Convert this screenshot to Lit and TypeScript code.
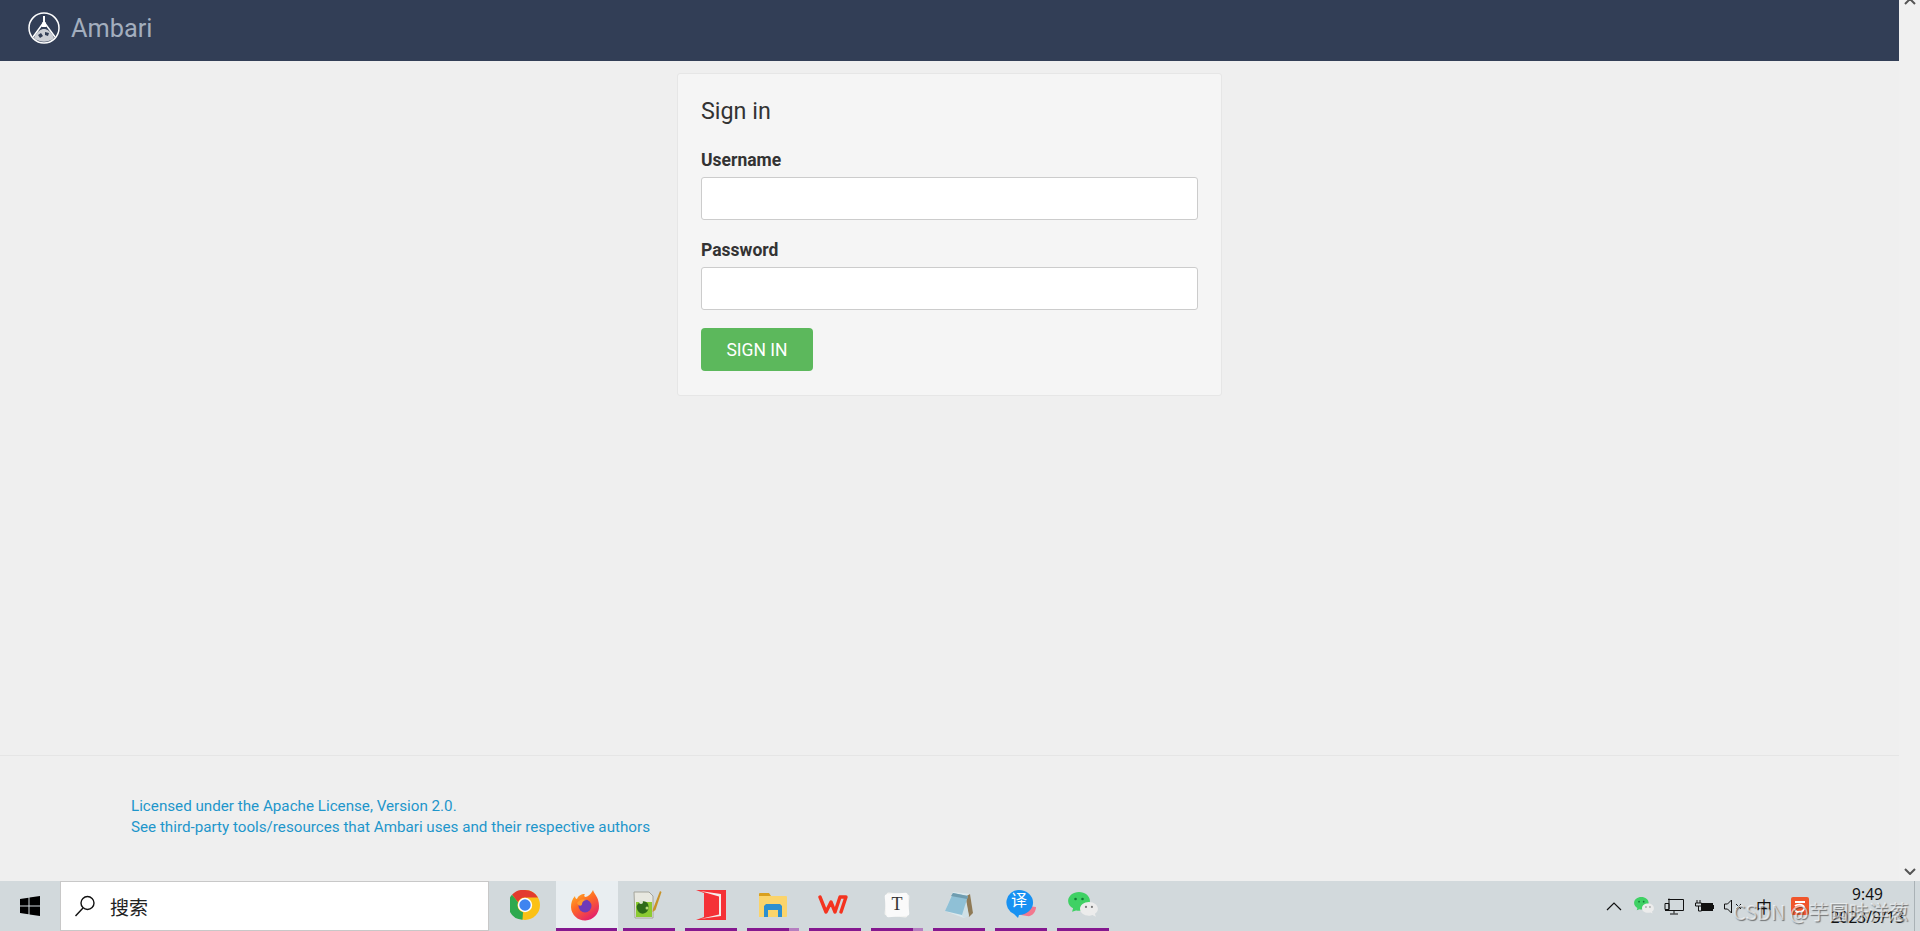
import { LitElement, html, css, svg } from "lit";
import { customElement } from "lit/decorators.js";

const chrome = svg`<svg width="30" height="30" viewBox="0 0 30 30"><circle cx="15" cy="15" r="15" fill="#fbc116"/><path d="M15 0a15 15 0 0 1 13 7.500H15a7.500 7.500 0 0 0-7 4.800L2 4.800A15 15 0 0 1 15 0z" fill="#e33b2e"/><path d="M2 4.800l6 7.500a7.500 7.500 0 0 0 5 10L12.500 29.800A15 15 0 0 1 2 4.800z" fill="#2da94f"/><circle cx="15" cy="15" r="7.200" fill="#fff"/><circle cx="15" cy="15" r="5.700" fill="#3f84f0"/></svg>`;
const firefox = svg`<svg class="shift" width="30" height="32" viewBox="0 0 30 32"><defs><linearGradient id="ff" x1="0" y1="0" x2="0.6" y2="1"><stop offset="0" stop-color="#ffc526"/><stop offset=".5" stop-color="#ff6a24"/><stop offset="1" stop-color="#e5236a"/></linearGradient></defs><path d="M23 1c1 4 6 7 6 16a14 14 0 0 1-28 1c0-4 1-8 4-11 0 2 1 3 2 3 1-3 4-5 8-5-1 1-1 2 0 3 3 0 6-3 8-7z" fill="url(#ff)"/><circle cx="15" cy="17" r="6.500" fill="#6e3ab8"/><path d="M7 14c2-3 6-5 10-3-3 0-5 2-5 4s-3 3-5-1z" fill="#ff9a2c"/></svg>`;
const npp = svg`<svg class="shift" width="29" height="29" viewBox="0 0 29 29"><path d="M1 2h15l4 4v22H2z" fill="#e8e8e0" stroke="#a5a59c"/><path d="M3 12h16v15H3z" fill="#8ccb32"/><path d="M6 13c3-3 8-2 9 1s1 7-3 9-7-1-8-4 0-4 2-6z" fill="#2e6b18"/><circle cx="8" cy="12" r="2" fill="#dce8d0"/><circle cx="14" cy="18" r="1.500" fill="#b6d87a"/><path d="M20 19L27 1l1.500 1-6 18-3 2z" fill="#c99328"/></svg>`;
const redDoc = svg`<svg width="30" height="30" viewBox="0 0 30 30"><path d="M0 0H30V30H0L8 27V3z" fill="#f53136"/><path d="M8 3L22 7V24L8 27z" fill="#f53136"/><path d="M4 1L23 6.500V24.500L4 29L25 26V4z" fill="#f6ecea"/></svg>`;
const folder = svg`<svg width="28" height="24" viewBox="0 0 28 24"><path d="M0 1a1 1 0 0 1 1-1h9l2 3H0z" fill="#d9a01f"/><path d="M0 3h27a1 1 0 0 1 1 1v19a1 1 0 0 1-1 1H0z" fill="#fbd46b"/><path d="M5 24V13l2-2h14l2 2v11h-4v-7h-10v7z" fill="#2d8fd0"/></svg>`;
const wps = svg`<svg class="shift" width="30" height="20" viewBox="0 0 30 20" fill="none" stroke="#f4331f" stroke-width="3.400" stroke-linejoin="round" stroke-linecap="round"><path d="M2 2l6 15 5-10 4 10 5-15h6l-5 15"/></svg>`;
const tIcon = svg`<svg width="28" height="28" viewBox="0 0 28 28"><rect x="2.500" y="2.500" width="23" height="23" rx="2" fill="#f2f2f0" transform="rotate(6 14 14)"/><rect x="2.500" y="2.500" width="23" height="23" rx="2" fill="#fafafa" transform="rotate(-5 14 14)"/></svg>`;
const pad = svg`<svg width="30" height="28" viewBox="0 0 30 28"><path d="M9 1L26 3L29 22L20 27L1 20z" fill="#dce8ec"/><path d="M26 3l3 19-4 4-4-20z" fill="#8f7a56"/><path d="M22 8l3 17-5 2-3-4z" fill="#cfe0e6"/><path d="M9 2L24 5L18 24L1 20z" fill="#8fc0d6"/><path d="M9 2L24 5l-1 3L7 5z" fill="#6f9caf"/></svg>`;
const trans = svg`<svg width="32" height="30" viewBox="0 0 32 30"><path d="M22 16l9 1c0 5-4 10-9 9l-6-1z" fill="#f2788e"/><path d="M14 0a13.500 12 0 0 1 0 25l-1 3-4-4A12.500 12.500 0 0 1 14 0z" fill="#1791f2"/></svg>`;
const wechat = (s: number) => svg`<svg width="${s}" height="${s * 0.86}" viewBox="0 0 30 26"><path d="M11 0c6 0 11 4 11 9s-5 10-11 10c-1 0-2 0-3-.3L4 20l1-3.500C2 15 0 12 0 9c0-5 5-9 11-9z" fill="#3fd164"/><circle cx="7.500" cy="7" r="1.300" fill="#127a35"/><circle cx="14.500" cy="7" r="1.300" fill="#127a35"/><path d="M21 10c5 0 9 3 9 7 0 2-1 4-3 5l1 3-3.500-1.700c-1 .3-2.500.7-3.500.7-5 0-9-3-9-7s4-7 9-7z" fill="#ececec"/><circle cx="18" cy="15" r="1.100" fill="#777"/><circle cx="24" cy="15" r="1.100" fill="#777"/></svg>`;

@customElement("app-root")
export class AppRoot extends LitElement {
  static styles = css`
    :host { display: block; height: 931px; overflow: hidden; position: relative; font-family: Roboto, "Noto Sans", sans-serif; background: #efefef; }
    .top { display: flex; height: 881px; }
    .page { flex: 1; display: flex; flex-direction: column; min-width: 0; }
    .nav { height: 61px; background: #323e56; display: flex; align-items: center; padding: 0 0 6px 27px; box-sizing: border-box; gap: 10px; flex: none; }
    .brand { font-size: 25.300px; color: #a3aebe; margin-top: 2px; }
    .main { flex: 1; padding-top: 12px; display: flex; justify-content: center; align-items: flex-start; }
    .card { width: 545px; height: 323px; box-sizing: border-box; background: #f5f5f5; border: 1px solid #e6e6e6; border-radius: 3px; padding: 24px 23px 23px; }
    h1 { margin: 0 0 25px; font-size: 23.300px; font-weight: 400; line-height: 27px; color: #333; }
    label { display: block; font-size: 17.500px; font-weight: 700; line-height: 20px; color: #333; margin-bottom: 7px; }
    .input { height: 43px; box-sizing: border-box; background: #fff; border: 1px solid #ccc; border-radius: 3px; margin-bottom: 20px; }
    .btn { width: 112px; height: 43px; margin-top: -2px; border: 0; border-radius: 4px; background: #5cb85c; color: #fff; font: 400 17.500px Roboto, sans-serif; display: flex; align-items: center; justify-content: center; }
    .footer { height: 126px; flex: none; box-sizing: border-box; border-top: 1px solid #e5e5e5; padding: 40px 0 0 131px; font-size: 15.200px; line-height: 21px; color: #1e96cb; }
    .bar { width: 21px; flex: none; background: #f0f0f0; display: flex; flex-direction: column; justify-content: space-between; align-items: center; padding: 0 0 6px; box-sizing: border-box; }
    .bar svg:first-child { margin-top: -2px; }
    .task { height: 50px; background: #d2d9dc; display: flex; align-items: stretch; }
    .win { width: 60px; display: flex; align-items: center; justify-content: center; flex: none; }
    .search { width: 429px; flex: none; box-sizing: border-box; background: #fff; border: 1px solid #c8c8c8; display: flex; align-items: center; padding-left: 13px; gap: 14px; font: 400 19px "Noto Sans CJK SC", sans-serif; color: #222; }
    .apps { display: flex; margin-left: 5px; }
    .app { width: 62px; position: relative; display: flex; align-items: center; justify-content: center; padding-bottom: 3px; box-sizing: border-box; }
    .app .shift { margin-right: 4px; }
    .app.on::after { content: ""; position: absolute; left: 5px; right: 5px; bottom: 0; height: 3px; background: #84188f; }
    .app.part::before { content: ""; position: absolute; right: 5px; bottom: 0; height: 3px; width: 10px; background: #b57fc0; z-index: 1; }
    .app.active { background: #e9eef1; }
    .app.active::after { left: 0; right: 1px; }
    .t-letter { position: absolute; font: 400 18px "Liberation Serif", serif; color: #333; }
    .y-letter { position: absolute; left: 21px; top: 8px; font: 400 16px/20px "Noto Sans CJK SC", sans-serif; color: #fff; }
    .tray { margin-left: auto; display: flex; align-items: center; }
    .ti { width: 30px; display: flex; justify-content: center; align-items: center; font: 400 16px "Noto Sans CJK SC", sans-serif; color: #111; }
    .ti.wide { width: 42px; }
    .clock { width: 93px; font: 400 15.500px/23px "Noto Sans", sans-serif; color: #111; text-align: center; box-sizing: border-box; white-space: nowrap; }
    .desk { width: 6px; align-self: stretch; border-left: 1px solid #aab2b6; box-sizing: border-box; }
    .wm { position: absolute; left: 1733px; top: 897px; font: 400 20px "Noto Sans CJK SC", sans-serif; color: rgba(255,255,255,.6); white-space: nowrap; text-shadow: 1px 1px 1px rgba(60,60,60,.65); }
  `;

  private app(icon: unknown, cls = "", extra: unknown = "") {
    return html`<div class="app ${cls}">${icon}${extra}</div>`;
  }

  render() {
    return html`
      <div class="top">
        <div class="page">
          <div class="nav">
            <svg width="34" height="34" viewBox="0 0 34 34" fill="none" stroke="#fff">
              <circle cx="17" cy="17" r="15" stroke-width="1.500"/>
              <path d="M17 5v8" stroke-width="2"/>
              <path d="M17 11L6 26M17 11l11 15" stroke-width="1.500"/>
              <path d="M15.500 11h3l1 5h-5z" fill="#fff" stroke="none"/>
              <path d="M7 27c3-7 7-9 10-9s7 2 10 9c-6 5-14 5-20 0z" fill="#fff" stroke="none" opacity=".75"/>
              <path d="M11 24l3-2 2 3-3 2zM18 21l4 1-1 3-3-1z" fill="#323e56" stroke="none"/>
            </svg>
            <span class="brand">Ambari</span>
          </div>
          <div class="main">
            <div class="card">
              <h1>Sign in</h1>
              <label>Username</label>
              <div class="input"></div>
              <label>Password</label>
              <div class="input"></div>
              <div class="btn">SIGN IN</div>
            </div>
          </div>
          <div class="footer">
            <div>Licensed under the Apache License, Version 2.0.</div>
            <div>See third-party tools/resources that Ambari uses and their respective authors</div>
          </div>
        </div>
        <div class="bar">
          <svg width="12" height="7" viewBox="0 0 12 7"><path d="M1 6l5-5 5 5" fill="none" stroke="#555" stroke-width="2"/></svg>
          <svg width="12" height="7" viewBox="0 0 12 7"><path d="M1 1l5 5 5-5" fill="none" stroke="#555" stroke-width="2"/></svg>
        </div>
      </div>
      <div class="task">
        <div class="win">
          <svg width="20" height="20" viewBox="0 0 20 20" fill="#000"><path d="M0 3l8.500-1.200v7.700H0zM9.500 1.600L20 0v9.500H9.500zM0 10.500h8.500v7.700L0 17zM9.500 10.500H20V20L9.500 18.400z"/></svg>
        </div>
        <div class="search">
          <svg width="22" height="22" viewBox="0 0 22 22" fill="none" stroke="#111" stroke-width="1.400"><circle cx="13.500" cy="8" r="6.500"/><path d="M9 13L1.500 21"/></svg>
          <span>搜索</span>
        </div>
        <div class="apps">
          ${this.app(chrome)}
          ${this.app(firefox, "on active")}
          ${this.app(npp, "on")}
          ${this.app(redDoc, "on")}
          ${this.app(folder, "on part")}
          ${this.app(wps, "on")}
          ${this.app(tIcon, "on part", html`<span class="t-letter">T</span>`)}
          ${this.app(pad, "on")}
          ${this.app(trans, "on", html`<span class="y-letter">译</span>`)}
          ${this.app(wechat(30), "on")}
        </div>
        <div class="tray">
          <div class="ti"><svg width="16" height="9" viewBox="0 0 16 9"><path d="M1 8l7-7 7 7" fill="none" stroke="#111" stroke-width="1.200"/></svg></div>
          <div class="ti">${wechat(20)}</div>
          <div class="ti"><svg width="20" height="17" viewBox="0 0 20 17" fill="none" stroke="#111"><path d="M4 1.500h15.500v11H1M5 .5v11M1 5.500h4v6H1zM10 12.500v3M6 16h8"/></svg></div>
          <div class="ti"><svg width="20" height="13" viewBox="0 0 20 13"><path d="M3 0v3M6 0v3M1.500 3h6v3h-6zM4.500 6v5h3" fill="none" stroke="#111"/><rect x="7" y="3" width="12" height="8" fill="#111"/><rect x="19" y="5" width="1.500" height="4" fill="#111"/></svg></div>
          <div class="ti"><svg width="20" height="15" viewBox="0 0 20 15" fill="none" stroke="#111"><path d="M.5 5h3l4-4v13l-4-4h-3zM12 5l5 5M17 5l-5 5"/></svg></div>
          <div class="ti">中</div>
          <div class="ti wide"><svg width="18" height="18" viewBox="0 0 18 18"><rect width="18" height="18" rx="2" fill="#f0562c"/><path d="M4 5h10M4 9c2-2 8-2 9 1s-2 5-5 5-4-1-4-3" fill="none" stroke="#fff" stroke-width="1.800"/></svg></div>
          <div class="clock"><div>9:49</div><div>2023/9/13</div></div>
          <div class="desk"></div>
        </div>
      </div>
      <div class="wm">CSDN @芋圆味洋葱</div>
    `;
  }
}
